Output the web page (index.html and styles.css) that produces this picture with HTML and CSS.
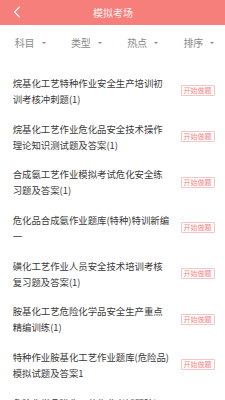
FILE: index.html
```html
<!DOCTYPE html>
<html lang="zh">
<head>
<meta charset="utf-8">
<link rel="stylesheet" href="styles.css">
</head>
<body>
<div class="app">
  <header class="topbar">
    <svg class="back" width="8" height="12" viewBox="0 0 8 12"><path d="M6.5 1 L1.5 6 L6.5 11" fill="none" stroke="#fff" stroke-width="1.1" stroke-linecap="round" stroke-linejoin="round"/></svg>
    <div class="title">模拟考场</div>
  </header>
  <nav class="filters">
    <div class="filter"><span>科目</span><i class="tri"></i></div>
    <div class="filter"><span>类型</span><i class="tri"></i></div>
    <div class="filter"><span>热点</span><i class="tri"></i></div>
    <div class="filter"><span>排序</span><i class="tri"></i></div>
  </nav>
  <ul class="list">
    <li class="row"><p class="name">烷基化工艺特种作业安全生产培训初训考核冲刺题(1)</p><span class="btn">开始做题</span></li>
    <li class="row"><p class="name">烷基化工艺作业危化品安全技术操作理论知识测试题及答案(1)</p><span class="btn">开始做题</span></li>
    <li class="row"><p class="name">合成氨工艺作业模拟考试危化安全练习题及答案(1)</p><span class="btn">开始做题</span></li>
    <li class="row"><p class="name">危化品合成氨作业题库(特种)特训新编一</p><span class="btn">开始做题</span></li>
    <li class="row"><p class="name">磺化工艺作业人员安全技术培训考核复习题及答案(1)</p><span class="btn">开始做题</span></li>
    <li class="row"><p class="name">胺基化工艺危险化学品安全生产重点精编训练(1)</p><span class="btn">开始做题</span></li>
    <li class="row"><p class="name">特种作业胺基化工艺作业题库(危险品)模拟试题及答案1</p><span class="btn">开始做题</span></li>
    <li class="row"><p class="name">危险化学品磺化工艺作业考试题阶证模拟考试</p><span class="btn">开始做题</span></li>
  </ul>
</div>
</body>
</html>
```
FILE: styles.css
```css
* { box-sizing: border-box; }
html, body { margin: 0; padding: 0; background: #fff; }
body {
  font-family: "Noto Sans CJK SC", "Noto Sans", sans-serif;
  width: 225px;
  height: 400px;
  overflow: hidden;
}
.app { width: 225px; }
.topbar {
  position: relative;
  height: 25px;
  background: #f77f7b;
  display: flex;
  align-items: center;
  justify-content: center;
}
.back {
  position: absolute;
  left: 13px;
  top: 6px;
}
.title {
  color: rgba(255,255,255,0.92);
  font-size: 10px;
  line-height: 12px;
  margin-left: 1px;
}
.filters {
  display: flex;
  height: 36px;
  align-items: center;
}
.filter {
  flex: 1;
  display: flex;
  align-items: center;
  justify-content: center;
  padding-left: 4px;
  color: #8a8a8a;
  font-size: 10px;
  line-height: 12px;
}
.tri {
  display: inline-block;
  width: 0;
  height: 0;
  margin-left: 7px;
  border-left: 2px solid transparent;
  border-right: 2px solid transparent;
  border-top: 2.5px solid #888;
}
.list {
  list-style: none;
  margin: 0;
  padding: 7px 0 0 0;
}
.row {
  display: flex;
  align-items: center;
  padding: 6.85px 10.5px 6.85px 12.7px;
  height: 45.7px;
}
.name {
  margin: 0;
  width: 159px;
  font-size: 9.4px;
  line-height: 16px;
  color: #3a3a3a;
}
.btn {
  margin-left: auto;
  width: 34px;
  height: 11px;
  border: 1px solid #f4c6c6;
  border-radius: 1px;
  color: #f28a88;
  font-size: 7px;
  line-height: 9px;
  text-align: center;
  white-space: nowrap;
}
```
